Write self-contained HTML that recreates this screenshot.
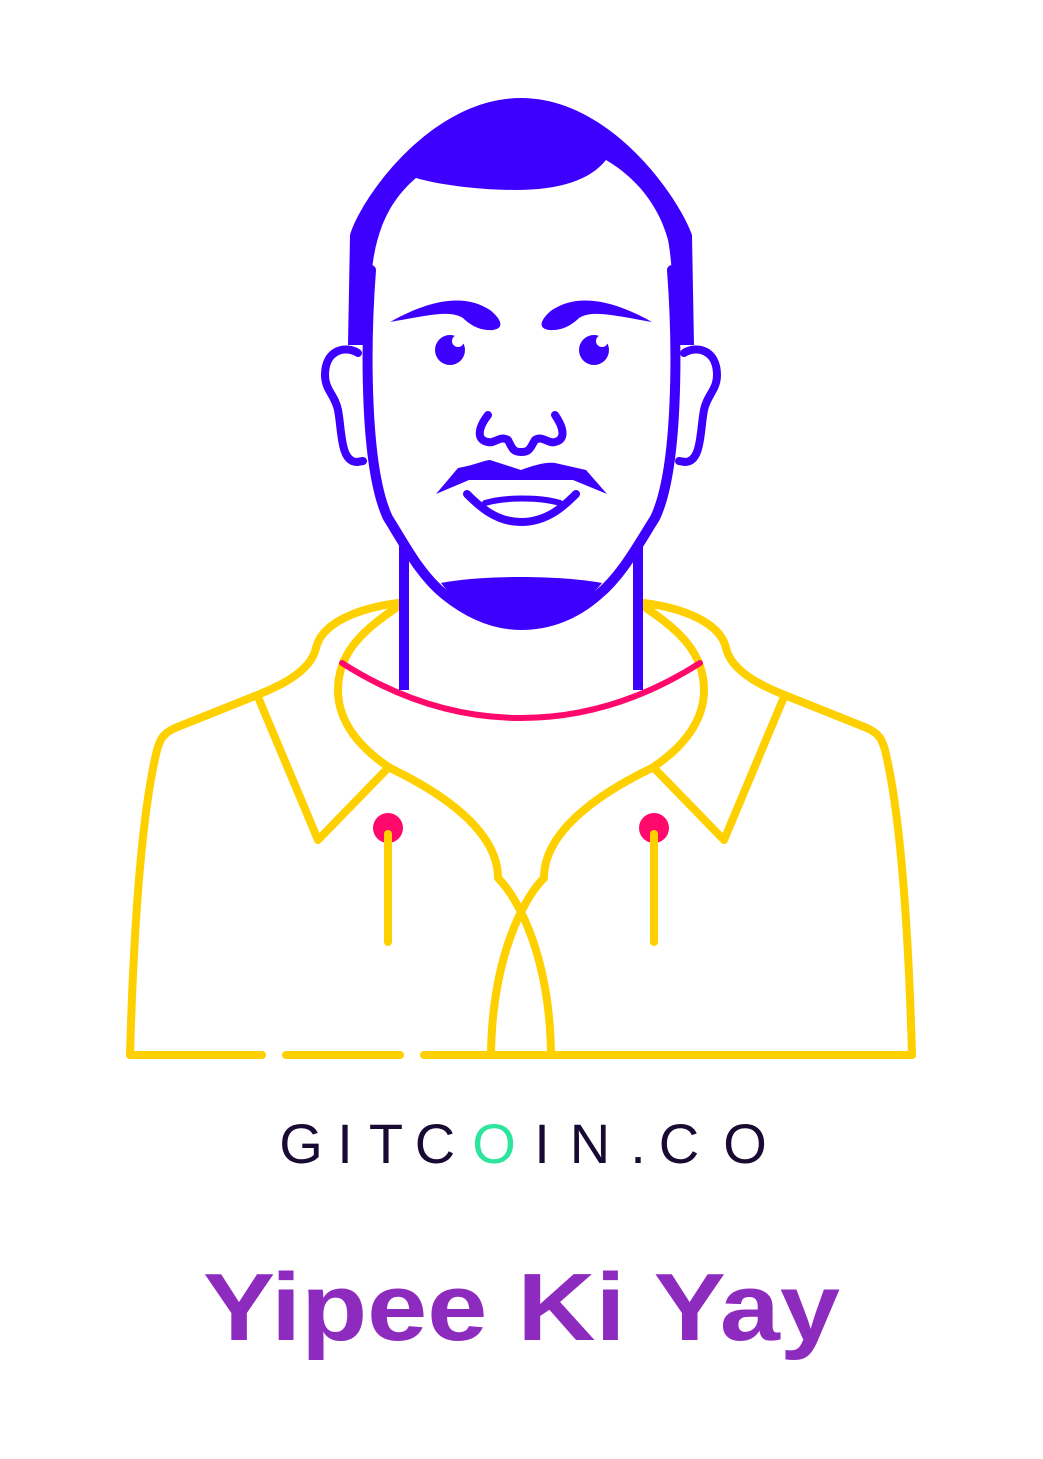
<!DOCTYPE html>
<html><head><meta charset="utf-8"><style>
html,body{margin:0;padding:0;background:#fff;width:1043px;height:1459px;overflow:hidden}
svg{display:block}
</style></head><body>
<svg width="1043" height="1459" viewBox="0 0 1043 1459" xmlns="http://www.w3.org/2000/svg">
<g fill="none" stroke="#FFD000" stroke-width="8" stroke-linecap="round" stroke-linejoin="round">
  <path d="M398,603 C360,608 322,622 316,648 C310,675 270,690 250,698 L175,728 C162,734 160,740 157,750 C140,820 133,950 130,1055"/>
  <path d="M644,603 C682,608 720,622 726,648 C732,675 772,690 792,698 L867,728 C880,734 882,740 885,750 C902,820 909,950 912,1055"/>
  <path d="M130,1055 L262,1055 M286,1055 L400,1055 M424,1055 L912,1055"/>
  <path d="M396,608 C360,632 338,655 338,690 C338,722 360,748 390,768 C440,792 498,830 498,878 C520,900 550,960 551,1055"/>
  <path d="M646,608 C682,632 704,655 704,690 C704,722 682,748 652,768 C602,792 544,830 544,878 C522,900 492,960 491,1055"/>
  <path d="M258,697 L318,840 L388,768"/>
  <path d="M784,697 L724,840 L654,768"/>
</g>
<g fill="#FF0A6C"><circle cx="388" cy="828" r="15"/><circle cx="654" cy="828" r="15"/></g>
<g fill="#FFD000"><rect x="384" y="830" width="8" height="116" rx="4"/><rect x="650" y="830" width="8" height="116" rx="4"/></g>
<path d="M342,663 C400,700 460,718 521,718 C582,718 642,700 700,663" fill="none" stroke="#FF0A6C" stroke-width="6" stroke-linecap="round"/>
<g fill="#3D00FF">
  <path d="M350,235 C360,200 430,98 521,98 C612,98 680,200 692,235 L694,345 L676,345 C674,300 672,260 668,240 C660,210 640,180 606,160 C590,180 560,190 515,190 C480,190 440,185 416,178 C390,200 376,230 372,270 L368,345 L348,345 Z"/>
  <path d="M390,322 C420,305 460,290 490,310 C500,318 506,328 493,330 C480,331 470,325 463,318 C450,310 430,315 390,322 Z"/>
  <path d="M652,322 C622,305 582,290 552,310 C542,318 536,328 549,330 C562,331 572,325 579,318 C592,310 612,315 652,322 Z"/>
  <circle cx="450" cy="350" r="15"/><circle cx="594" cy="350" r="15"/>
  <path d="M436,494 L458,468 C475,465 485,460 490,460 L521,470 C535,465 545,462 555,463 L586,470 L607,494 L573,480 L469,480 Z"/>
  <path d="M441,583 C480,575 560,575 602,583 C580,610 555,625 521,625 C487,625 462,610 441,583 Z"/>
</g>
<g fill="#fff"><circle cx="458" cy="341" r="6"/><circle cx="602" cy="341" r="6"/></g>
<g fill="none" stroke="#3D00FF" stroke-width="10" stroke-linecap="round" stroke-linejoin="round">
  <path d="M371,270 C365,350 365,470 388,518 C405,545 420,575 445,595 C470,615 495,625 521,625 C550,625 575,615 598,595 C622,575 638,545 655,518 C678,470 678,350 672,270"/>
  <path d="M404,545 L404,690 M638,545 L638,690" stroke-linecap="butt"/>
</g>
<g fill="none" stroke="#3D00FF" stroke-width="8" stroke-linecap="round" stroke-linejoin="round">
  <path d="M358,353 C345,345 325,350 325,375 C325,390 335,395 338,410 C342,430 340,462 357,462 L363,461"/>
  <path d="M684,353 C697,345 717,350 717,375 C717,390 707,395 704,410 C700,430 702,462 685,462 L679,461"/>
  <path d="M488,415 C478,428 476,440 488,442 C495,444 500,435 508,440 C512,448 513,452 521,452 C530,452 530,448 535,440 C542,435 548,444 555,442 C566,440 564,428 555,415"/>
  <path d="M467,494 C478,505 495,522 521,522 C548,522 565,505 576,494"/>
  <path d="M485,503 C505,497 540,497 560,503" stroke-width="6"/>
</g>
<g font-family="Liberation Sans, sans-serif" font-size="56" fill="#180A33" text-anchor="middle">
  <text x="301" y="1163">G</text>
  <text x="345" y="1163">I</text>
  <text x="386" y="1163">T</text>
  <text x="435" y="1163">C</text>
  <text x="494" y="1163" fill="#2EE59D">O</text>
  <text x="542" y="1163">I</text>
  <text x="590" y="1163">N</text>
  <text x="638" y="1163">.</text>
  <text x="679" y="1163">C</text>
  <text x="745" y="1163">O</text>
</g>
<text x="203" y="1340" textLength="637" lengthAdjust="spacingAndGlyphs" font-family="Liberation Sans, sans-serif" font-weight="bold" font-size="96" fill="#8E2BBF">Yipee Ki Yay</text>
</svg>
</body></html>
